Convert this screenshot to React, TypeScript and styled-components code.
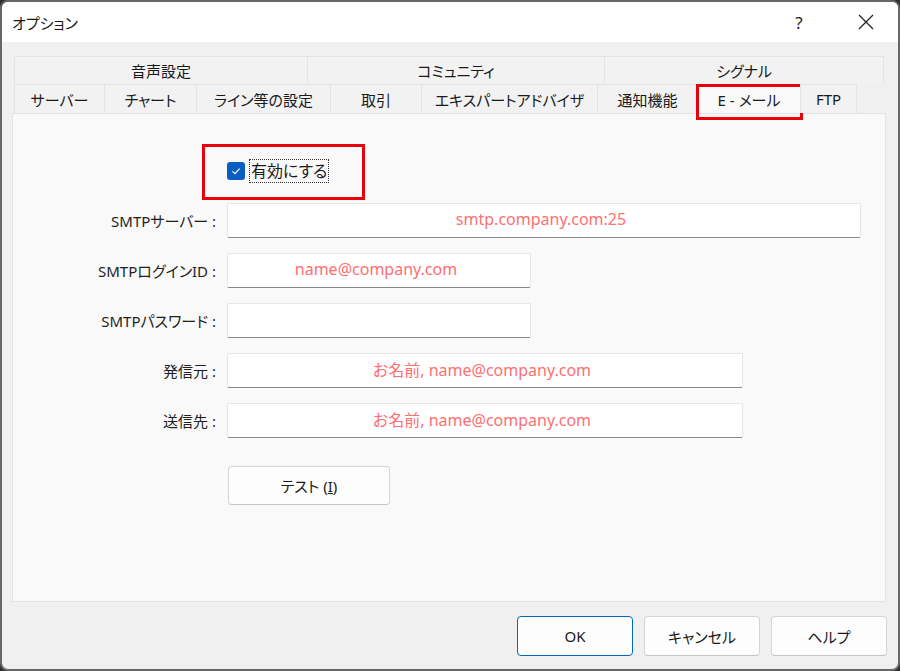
import * as React from 'react';
import styled, { createGlobalStyle } from 'styled-components';

const GlobalStyle = createGlobalStyle`
  html, body {
    margin: 0;
    padding: 0;
    background: #2e2e2e;
  }
  body {
    font-family: "Noto Sans", "Noto Sans CJK JP", sans-serif;
    font-feature-settings: "palt";
    color: #1a1a1a;
  }
`;

const FONT = `"Noto Sans", "Noto Sans CJK JP", sans-serif`;

const Window = styled.div`
  width: 900px;
  height: 671px;
  box-sizing: border-box;
  border: 2px solid #676767;
  border-radius: 8px;
  background: #f0f0f0;
  overflow: hidden;
  display: flex;
  flex-direction: column;
`;

const TitleBar = styled.div`
  height: 40px;
  background: #ffffff;
  display: flex;
  align-items: center;
  padding-left: 10px;
  font-size: 15px;
  font-family: ${FONT};
`;

const Title = styled.div`
  flex: 1;
`;

const TitleButton = styled.div<{ $w: number }>`
  width: ${p => p.$w}px;
  height: 40px;
  display: flex;
  align-items: center;
  justify-content: center;
  font-size: 17px;
  color: #222;
`;

const Body = styled.div`
  flex: 1;
  display: flex;
  flex-direction: column;
  padding: 14px 10px 0 10px;
`;

const TabRow = styled.div<{ $h: number }>`
  display: flex;
  margin-left: 2px;
  width: 870px;
  height: ${p => p.$h}px;
`;

const Tab = styled.div<{ $w: number; $active?: boolean }>`
  width: ${p => p.$w}px;
  height: 100%;
  box-sizing: border-box;
  display: flex;
  align-items: center;
  justify-content: center;
  font-size: 15px;
  font-family: ${FONT};
  font-feature-settings: "palt";
  background: ${p => (p.$active ? '#f9f9f9' : '#f2f2f2')};
  border-top: 1px solid #e3e3e3;
  border-left: 1px solid #e3e3e3;
  &:last-child {
    border-right: 1px solid #e3e3e3;
  }
  position: relative;
`;

const Highlight = styled.div`
  position: absolute;
  left: -2px;
  right: -3px;
  top: -1px;
  bottom: -7px;
  border: 3px solid #e8000b;
  pointer-events: none;
`;

const Panel = styled.div`
  width: 874px;
  height: 489px;
  box-sizing: border-box;
  background: #f9f9f9;
  border: 1px solid #e3e3e3;
  padding: 30px 0 0 189px;
  display: flex;
  flex-direction: column;
`;

const RedBox = styled.div`
  width: 163px;
  height: 56px;
  box-sizing: border-box;
  border: 3px solid #e8000b;
  display: flex;
  align-items: center;
  padding: 0 0 2px 22px;
  gap: 5px;
`;

const CheckBox = styled.div`
  width: 18px;
  height: 18px;
  border-radius: 3px;
  background: #0a5ec2;
  display: flex;
  align-items: center;
  justify-content: center;
`;

const CheckLabel = styled.span`
  font-size: 16px;
  font-family: ${FONT};
  outline: 1px dotted #333;
  padding: 0 1px;
  line-height: 22px;
`;

const Form = styled.div`
  display: grid;
  grid-template-columns: 203px auto;
  column-gap: 11px;
  row-gap: 15px;
  margin-left: -189px;
  margin-top: 3px;
`;

const Label = styled.div`
  font-size: 15px;
  font-family: ${FONT};
  font-feature-settings: "palt";
  text-align: right;
  align-self: center;
  color: #1f1f1f;
`;

const Field = styled.div<{ $w: number }>`
  width: ${p => p.$w}px;
  height: 35px;
  box-sizing: border-box;
  background: #ffffff;
  border: 1px solid #e6e6e6;
  border-bottom: 1px solid #878787;
  border-radius: 2px;
  display: flex;
  align-items: center;
  justify-content: center;
  font-size: 16px;
  font-family: ${FONT};
  color: #ff6f72;
  padding: 0 6px 3px 0;
`;

const Button = styled.div<{ $w: number; $h?: number; $primary?: boolean }>`
  width: ${p => p.$w}px;
  height: ${p => p.$h ?? 40}px;
  box-sizing: border-box;
  background: #fdfdfd;
  border: 1px solid ${p => (p.$primary ? '#0067c0' : '#d4d4d4')};
  border-bottom-color: ${p => (p.$primary ? '#0067c0' : '#c4c4c4')};
  border-radius: 4px;
  display: flex;
  align-items: center;
  justify-content: center;
  font-size: 15px;
  font-family: ${FONT};
  color: #1a1a1a;
`;

const TestWrap = styled.div`
  grid-column: 2;
  margin-top: 13px;
  padding-left: 1px;
  font-size: 16px;
`;

const Footer = styled.div`
  display: flex;
  justify-content: flex-end;
  gap: 11px;
  padding: 14px 0 0 0;
  margin-right: 1px;
`;

const upperTabs = [
  { label: '音声設定', w: 293 },
  { label: 'コミュニティ', w: 297 },
  { label: 'シグナル', w: 280 },
];

const lowerTabs = [
  { label: 'サーバー', w: 90 },
  { label: 'チャート', w: 92 },
  { label: 'ライン等の設定', w: 134 },
  { label: '取引', w: 91 },
  { label: 'エキスパートアドバイザ', w: 176 },
  { label: '通知機能', w: 100 },
  { label: 'E - メール', w: 103, active: true },
  { label: 'FTP', w: 57 },
];

const fields = [
  { label: 'SMTPサーバー :', w: 634, value: 'smtp.company.com:25' },
  { label: 'SMTPログインID :', w: 304, value: 'name@company.com' },
  { label: 'SMTPパスワード :', w: 304, value: '' },
  { label: '発信元 :', w: 516, value: 'お名前, name@company.com' },
  { label: '送信先 :', w: 516, value: 'お名前, name@company.com' },
];

const App = () => (
  <>
    <GlobalStyle />
    <Window>
      <TitleBar>
        <Title>オプション</Title>
        <TitleButton $w={70}>?</TitleButton>
        <TitleButton $w={64}>
          <svg width="16" height="16" viewBox="0 0 16 16">
            <path d="M1 1 L15 15 M15 1 L1 15" stroke="#222" strokeWidth="1.3" fill="none" />
          </svg>
        </TitleButton>
      </TitleBar>
      <Body>
        <TabRow $h={28}>
          {upperTabs.map(t => (
            <Tab key={t.label} $w={t.w}>{t.label}</Tab>
          ))}
        </TabRow>
        <TabRow $h={29}>
          {lowerTabs.map(t => (
            <Tab key={t.label} $w={t.w} $active={t.active}>
              {t.label}
              {t.active && <Highlight />}
            </Tab>
          ))}
        </TabRow>
        <Panel>
          <RedBox>
            <CheckBox>
              <svg width="12" height="12" viewBox="0 0 12 12">
                <path d="M2.5 6.3 L5 8.6 L9.6 3.6" stroke="#fff" strokeWidth="1.1" fill="none" />
              </svg>
            </CheckBox>
            <CheckLabel>有効にする</CheckLabel>
          </RedBox>
          <Form>
            {fields.map(f => (
              <React.Fragment key={f.label}>
                <Label>{f.label}</Label>
                <Field $w={f.w}>{f.value}</Field>
              </React.Fragment>
            ))}
            <TestWrap>
              <Button $w={162} $h={39}>
                テスト (<u>I</u>)
              </Button>
            </TestWrap>
          </Form>
        </Panel>
        <Footer>
          <Button $w={116} $primary>OK</Button>
          <Button $w={116}>キャンセル</Button>
          <Button $w={116}>ヘルプ</Button>
        </Footer>
      </Body>
    </Window>
  </>
);

export default App;
